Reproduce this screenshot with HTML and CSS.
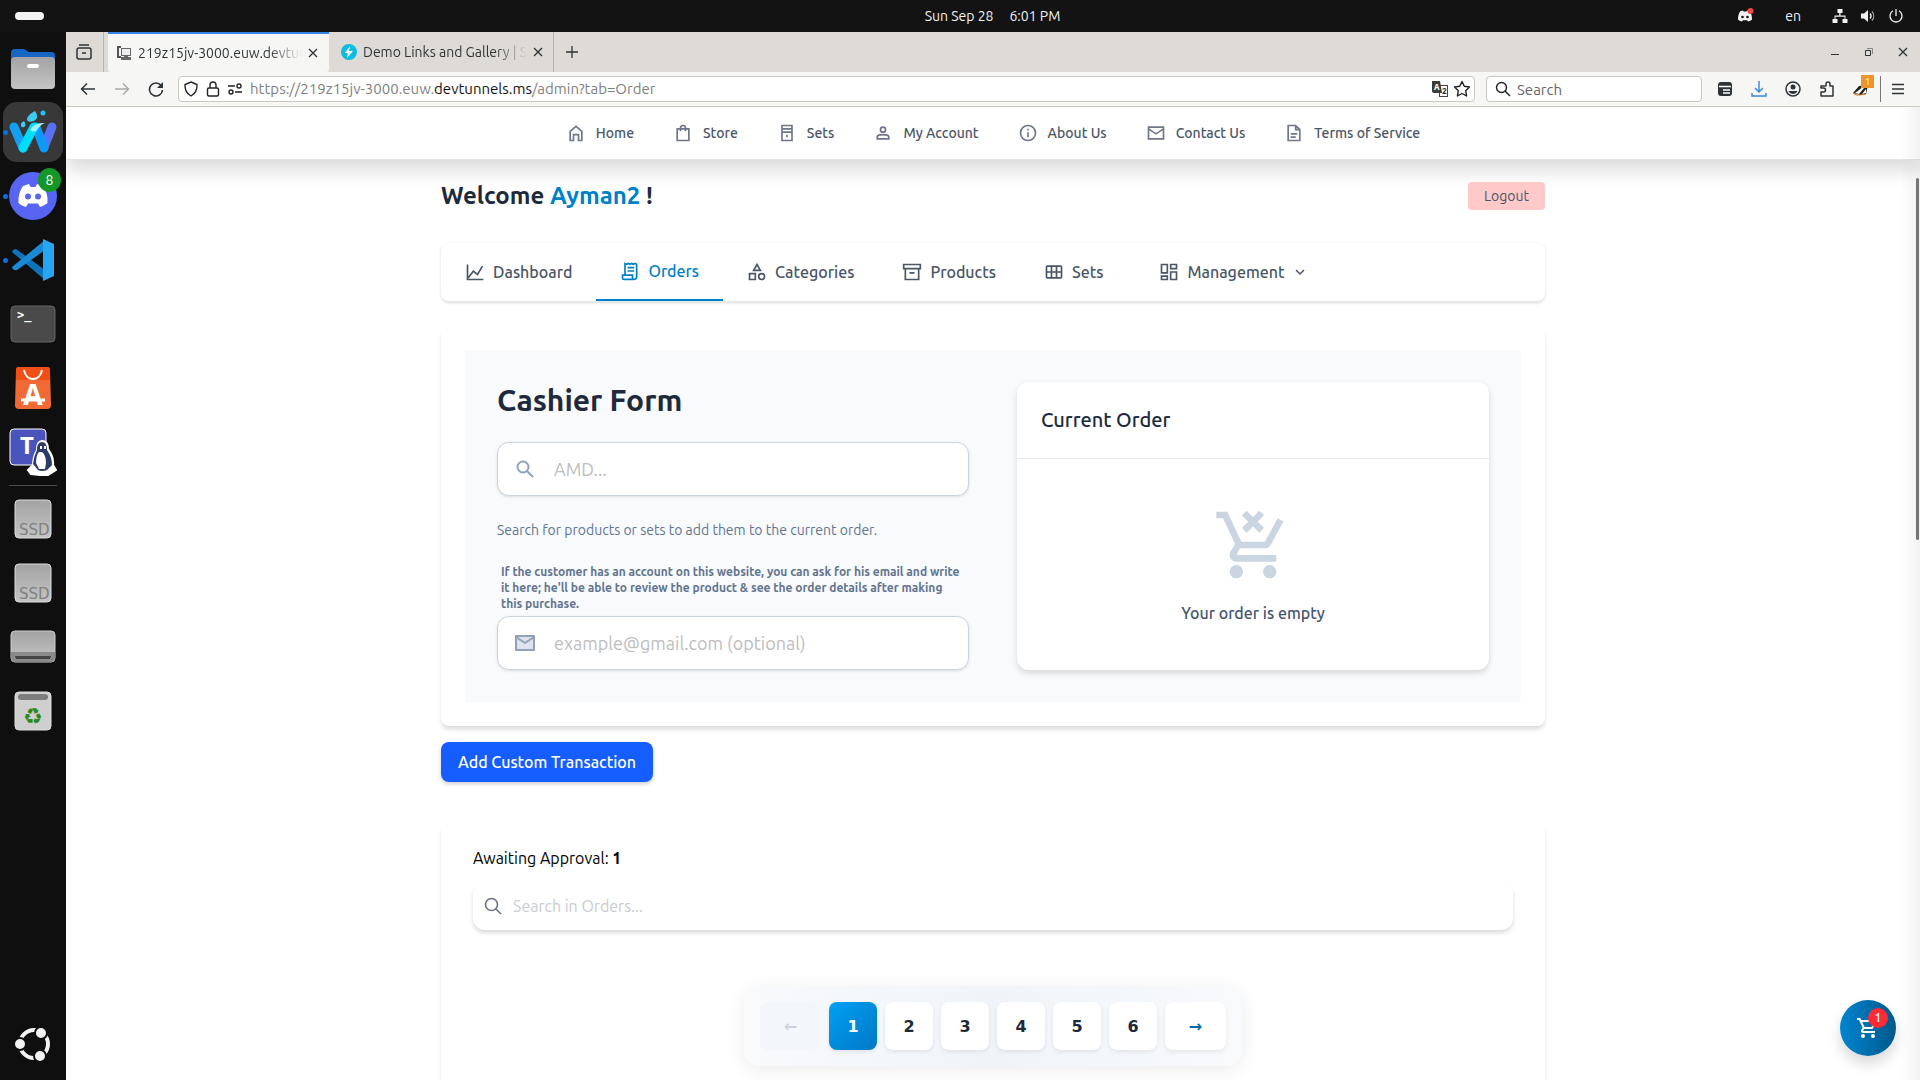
FILE: index.html
```html
<!DOCTYPE html>
<html lang="en">
<head>
    <meta charset="UTF-8">
    <meta name="viewport" content="width=device-width, initial-scale=1.0">
    <title>Admin - Orders</title>
    <link rel="stylesheet" href="styles.css">
</head>
<body>
    <!-- System bar -->
    <header class="topbar">
        <button class="activities" aria-label="Activities"></button>
        <div class="clock"><span>Sun Sep 28</span><span>6:01 PM</span></div>
        <div class="tray">
            <svg class="tray-discord" width="18" height="16" viewBox="0 0 18 16"><path fill="#f2f2f2" d="M5 3 7 2.500l.5 1h3l.5-1 3 1c1.500 2.500 2 5 2 8-1 1-2.500 1.700-4 2l-.8-1.300H6.800L6 13.500c-1.500-.3-3-1-4-2 0-3 .5-5.500 2-8z"/><circle cx="6.500" cy="9" r="1.300" fill="#131313"/><circle cx="11.500" cy="9" r="1.300" fill="#131313"/><circle cx="14.500" cy="3" r="3" fill="#f04747"/></svg>
            <span class="lang">en</span>
            <svg width="16" height="16" viewBox="0 0 16 16" fill="#f2f2f2"><path d="M5.500 1h5v4h-2v2.500h5V11h2v4h-5v-4h2V8.800h-9V11h2v4h-5v-4h2V7.500h4.700V5H5.500z"/></svg>
            <svg width="16" height="16" viewBox="0 0 16 16"><path fill="#f2f2f2" d="M1 5.500h3L8 2v12l-4-3.500H1z"/><path fill="none" stroke="#f2f2f2" stroke-width="1.300" d="M10 5.500c1.300 1.500 1.300 3.500 0 5"/><path fill="none" stroke="#999" stroke-width="1.300" d="M12 3.500c2.300 2.600 2.300 6.400 0 9"/></svg>
            <svg width="16" height="16" viewBox="0 0 16 16" fill="none" stroke="#f2f2f2" stroke-width="1.300"><path d="M5 2.800a6 6 0 1 0 6 0M8 1v7"/></svg>
        </div>
    </header>

    <div class="desktop">
        <!-- Dock -->
        <nav class="dock" aria-label="Dock">
            <button class="dock-item" aria-label="Files">
                <svg width="48" height="48" viewBox="0 0 48 48"><defs><linearGradient id="grey" x1="0" y1="0" x2="0" y2="1"><stop offset="0" stop-color="#a3a3a3"/><stop offset="1" stop-color="#c4c4c4"/></linearGradient></defs><path fill="#1766c2" d="M2 9q0-4 4-4h9l5 3h22q4 0 4 4v14H2z"/><rect x="2" y="13" width="44" height="32" rx="4" fill="url(#grey)"/><rect x="18" y="20" width="12" height="4" rx="2" fill="#fff"/></svg>
            </button>
            <button class="dock-item running current" aria-label="Waterfox">
                <svg width="48" height="48" viewBox="0 0 48 48" fill="none" stroke-linecap="round" stroke-linejoin="round" stroke-width="9"><path stroke="#12a0f2" d="m5 19 9 21"/><path stroke="#5871f4" d="m43 19-8 20"/><path stroke="#0d9bfa" d="m27 19 8 21"/><path stroke="#00dcfb" d="m14 40 11-21"/><path fill="#9ff6fc" d="M21 22q4-8 15-7-4 1-8 7-3 3-7 0z"/><path fill="#3ecdf0" d="M18 12q0-5 8-9 5 7-1 10-6 2-7-1zM12 18q-1-3 3-5 3 5 0 6-2 1-3-1z"/><circle cx="34" cy="5" r="2.500" fill="#25c3ee"/></svg>
            </button>
            <button class="dock-item running" aria-label="Discord">
                <svg width="48" height="48" viewBox="0 0 48 48"><circle cx="24" cy="24" r="24" fill="#5865f2"/><path fill="#fff" d="m14 14 6-2 1.500 3h5l1.500-3 6 2c3.500 5 5 10.500 4.500 17-2 2-5 3.300-7.500 4l-2-3.500h-10L17 35c-2.500-.7-5.500-2-7.500-4C9 24.500 10.500 19 14 14z"/><circle cx="19" cy="24.500" r="3" fill="#5865f2"/><circle cx="29" cy="24.500" r="3" fill="#5865f2"/></svg>
                <span class="dock-badge">8</span>
            </button>
            <button class="dock-item running" aria-label="Code">
                <svg width="48" height="48" viewBox="0 0 48 48"><path fill="#0d75bd" d="M3 16q1-3 4-3l29 21v10z"/><path fill="#1a8ad4" d="m36 4-33 27q1 4 5 3l28-20z"/><path fill="#27a5f2" d="m34 3 11 5v32l-11 5z"/></svg>
            </button>
            <button class="dock-item" aria-label="Terminal">
                <svg width="48" height="48" viewBox="0 0 48 48"><rect x="2" y="6" width="44" height="36" rx="4" fill="#4a4a4a" stroke="#656565"/><text class="icon-mono" x="8" y="19">&gt;_</text></svg>
            </button>
            <button class="dock-item" aria-label="App Center">
                <svg width="48" height="48" viewBox="0 0 48 48"><path fill="#ef6a35" d="M10 3h28q3 0 3 3l1 35q0 4-4 4H10q-4 0-4-4L7 6q0-3 3-3z"/><path fill="#f04e17" d="M10 3h28q3 0 3 3v10H7V6q0-3 3-3z"/><path fill="none" stroke="#fff" stroke-width="2" d="M15 6c2 12 16 12 18 0"/><text class="icon-store" x="24" y="41">A</text><path stroke="#fff" stroke-width="3" d="M12 36h24"/></svg>
            </button>
            <button class="dock-item" aria-label="Teams for Linux">
                <svg width="48" height="48" viewBox="0 0 48 48"><rect x="1" y="1" width="36" height="36" rx="4" fill="#4b53bc" stroke="#fff"/><text class="icon-teams" x="18" y="26">T</text><path fill="#fff" stroke="#fff" stroke-width="2" d="M33 13q6 0 6 8 6 8 5 16l3 5-8 5h-8l-9-1-3-4 5-5q0-8 4-15 0-9 5-9z"/><path fill="#2c3a66" d="M33 14q5 0 5 8 5 7 5 15l-5 5q-5 2-9 0l-5-6q1-8 4-14 0-8 5-8z"/><path fill="#fff" d="M33 24q4 3 4 11l-1 6h-6l-3-6q0-8 3-11z"/><path fill="#fff" d="M31 18h2v3h-2zM35 18h2v3h-2z"/></svg>
            </button>
            <hr class="dock-line">
            <button class="dock-item" aria-label="SSD volume">
                <svg width="48" height="48" viewBox="0 0 48 48"><rect x="6" y="5" width="36" height="38" rx="4" fill="url(#grey)" stroke="#ddd"/><text class="icon-ssd" x="10" y="40">SSD</text></svg>
            </button>
            <button class="dock-item" aria-label="Second SSD volume">
                <svg width="48" height="48" viewBox="0 0 48 48"><rect x="6" y="5" width="36" height="38" rx="4" fill="url(#grey)" stroke="#ddd"/><text class="icon-ssd" x="10" y="40">SSD</text></svg>
            </button>
            <button class="dock-item" aria-label="Disk">
                <svg width="48" height="48" viewBox="0 0 48 48"><rect x="2" y="8" width="44" height="31" rx="4" fill="url(#grey)" stroke="#ccc"/><path fill="#8a8a8a" d="M2 29h44v6q0 4-4 4H6q-4 0-4-4z"/><path fill="#444" d="M6 33h36l-1 3H7z"/></svg>
            </button>
            <button class="dock-item" aria-label="Trash">
                <svg width="48" height="48" viewBox="0 0 48 48"><rect x="6" y="5" width="36" height="38" rx="4" fill="#cfcfcf" stroke="#ddd"/><rect x="9" y="7" width="30" height="6" rx="3" fill="#7d7d7d"/><text class="icon-recycle" x="24" y="37">♻</text></svg>
            </button>
            <button class="dock-item dock-apps" aria-label="Show Apps">
                <svg width="48" height="48" viewBox="0 0 48 48"><circle cx="25" cy="24" r="14" fill="none" stroke="#f2f2f2" stroke-width="4"/><g fill="#f2f2f2" stroke="#0f0f0f" stroke-width="2"><circle cx="11" cy="24" r="6"/><circle cx="32" cy="13" r="6"/><circle cx="31" cy="36" r="6"/></g></svg>
            </button>
        </nav>

        <!-- Browser window -->
        <div class="browser">
            <div class="tabstrip">
                <button class="tab-list" aria-label="List tabs"><svg width="18" height="18" viewBox="0 0 18 18" fill="none" stroke="#2e3436" stroke-width="1.500"><rect x="2" y="5" width="14" height="11" rx="2"/><path d="M4 2h10M7 10h4"/></svg></button>
                <div class="tab tab-active">
                    <svg width="16" height="16" viewBox="0 0 16 16"><path fill="#555" d="M1 1h4v2H3v8h2v2H1z"/><rect x="5.500" y="3.500" width="9" height="7" fill="#eee" stroke="#666"/><path fill="#666" d="M8 11h4v1h3v3H5v-3h3z"/></svg>
                    <span class="tab-title">219z15jv-3000.euw.devtunnels</span>
                    <button class="tab-close" aria-label="Close tab"><svg width="10" height="10" viewBox="0 0 10 10" stroke="#2e3436" stroke-width="1.300"><path d="m1 1 8 8M9 1 1 9"/></svg></button>
                </div>
                <div class="tab">
                    <svg width="16" height="16" viewBox="0 0 16 16"><circle cx="8" cy="8" r="8" fill="#0dbce0"/><path fill="#fff" d="M9 2 4 9h3l-1 5 6-7H8z"/></svg>
                    <span class="tab-title">Demo Links and Gallery | S</span>
                    <button class="tab-close" aria-label="Close tab"><svg width="10" height="10" viewBox="0 0 10 10" stroke="#2e3436" stroke-width="1.300"><path d="m1 1 8 8M9 1 1 9"/></svg></button>
                </div>
                <button class="tab-new" aria-label="New tab"><svg width="14" height="14" viewBox="0 0 14 14" stroke="#2e3436" stroke-width="1.300"><path d="M7 1v12M1 7h12"/></svg></button>
                <div class="window-buttons">
                    <button aria-label="Minimize"><svg width="10" height="10" viewBox="0 0 10 10" stroke="#2e3436"><path d="M1 7.500h8"/></svg></button>
                    <button aria-label="Restore"><svg width="10" height="10" viewBox="0 0 10 10" fill="none" stroke="#2e3436"><path d="M1.500 3.500h5v5h-5z"/><path stroke="#888" d="M3 1.500h5.500V7"/></svg></button>
                    <button aria-label="Close"><svg width="10" height="10" viewBox="0 0 10 10" stroke="#2e3436" stroke-width="1.300"><path d="m1 1 8 8M9 1 1 9"/></svg></button>
                </div>
            </div>

            <div class="toolbar">
                <button class="tool" aria-label="Back"><svg width="16" height="16" viewBox="0 0 16 16" fill="none" stroke="#2e3436" stroke-width="1.500"><path d="M15 8H1.500M7 2.500 1.500 8 7 13.500"/></svg></button>
                <button class="tool" aria-label="Forward"><svg width="16" height="16" viewBox="0 0 16 16" fill="none" stroke="#aaa" stroke-width="1.500"><path d="M1 8h13.500M9 2.500 14.500 8 9 13.500"/></svg></button>
                <button class="tool" aria-label="Reload"><svg width="16" height="16" viewBox="0 0 16 16" fill="none" stroke="#2e3436" stroke-width="1.600"><path d="M13.500 5A6.500 6.500 0 1 0 14.500 9"/><path fill="#2e3436" stroke="none" d="M15 1v6H9z"/></svg></button>
                <div class="urlbar">
                    <svg width="16" height="16" viewBox="0 0 16 16" fill="none" stroke="#222" stroke-width="1.400"><path d="m8 1 6 2.500c.3 5-1.500 9-6 11.500-4.500-2.500-6.300-6.500-6-11.500z"/></svg>
                    <svg width="16" height="16" viewBox="0 0 16 16" fill="none" stroke="#222" stroke-width="1.400"><rect x="2.500" y="7" width="11" height="8" rx="1.500"/><path d="M5 7V4a3 3 0 0 1 6 0v3"/></svg>
                    <svg width="16" height="16" viewBox="0 0 16 16" fill="none" stroke="#222" stroke-width="1.400"><path d="M1 5h7M8 11h7"/><circle cx="12" cy="5" r="2"/><circle cx="4" cy="11" r="2"/></svg>
                    <span class="url">https://219z15jv-3000.euw.<b>devtunnels.ms</b>/admin?tab=Order</span>
                    <button class="mini" aria-label="Translate"><svg width="18" height="18" viewBox="0 0 18 18"><rect x="8.500" y="5.500" width="8" height="11" fill="#fff" stroke="#444"/><path fill="#3c3c3c" d="M1 1h8l2 12H3q-2 0-2-2z"/><text x="3" y="10" class="icon-tr" fill="#fff">A</text><text x="11" y="14" class="icon-tr" fill="#333">2</text></svg></button>
                    <button class="mini" aria-label="Bookmark"><svg width="18" height="18" viewBox="0 0 18 18" fill="none" stroke="#222" stroke-width="1.400" stroke-linejoin="round"><path d="m9 1.500 2.300 4.800 5.200.7-3.800 3.700.9 5.300L9 13.500 4.400 16l.9-5.300L1.500 7l5.200-.7z"/></svg></button>
                </div>
                <div class="browser-search">
                    <svg width="16" height="16" viewBox="0 0 16 16" fill="none" stroke="#222" stroke-width="1.400"><circle cx="6.500" cy="6.500" r="5"/><path d="m10 10 5 5"/></svg>
                    <input type="text" placeholder="Search" aria-label="Search the web">
                </div>
                <button class="tool" aria-label="Containers"><svg width="16" height="16" viewBox="0 0 16 16"><rect x="1" y="1" width="14" height="14" rx="3" fill="#2e3436"/><path stroke="#fff" stroke-width="1.500" d="M2 5.500h12M6 9h7M6 12h7"/></svg></button>
                <button class="tool" aria-label="Downloads"><svg width="16" height="16" viewBox="0 0 16 16" fill="none" stroke="#3584e4" stroke-width="1.400"><path d="M8 0v11M4 7l4 4 4-4M1 12v3h14v-3"/></svg></button>
                <button class="tool" aria-label="Account"><svg width="16" height="16" viewBox="0 0 16 16"><circle cx="8" cy="8" r="7" fill="none" stroke="#2e3436" stroke-width="1.500"/><circle cx="8" cy="6" r="2.500" fill="#2e3436"/><path fill="#2e3436" d="M3.500 10h9q-1.500 3-4.500 3t-4.500-3z"/></svg></button>
                <button class="tool" aria-label="Extensions"><svg width="16" height="16" viewBox="0 0 16 16" fill="none" stroke="#2e3436" stroke-width="1.500" stroke-linejoin="round"><path d="M2 15V11h2.500a1.600 1.600 0 0 0 0-4H2V5h5V3a2 2 0 0 1 4 0v2h3v10z"/></svg></button>
                <button class="tool tool-badger" aria-label="Privacy Badger"><svg width="16" height="16" viewBox="0 0 16 16"><path fill="#222" d="M0 12 6 5l9-1-2 9-6 1z"/><path fill="#fff" d="m2 12 8-6 1 1-5 6zM9 13l4-5v4z"/><path fill="none" stroke="#e0741e" d="m0 12 3 2h4l6-1"/></svg><span class="tool-badge">1</span></button>
                <button class="tool tool-menu" aria-label="Menu"><svg width="16" height="16" viewBox="0 0 16 16" stroke="#2e3436" stroke-width="1.400"><path d="M2 3.500h12M2 8h12M2 12.500h12"/></svg></button>
            </div>

            <!-- Web page -->
            <div class="page">
                <nav class="site-nav">
                    <a href="#"><svg viewBox="0 0 24 24"><path d="M5 10v11h4v-7h6v7h4V10l-7-6z"/></svg>Home</a>
                    <a href="#"><svg viewBox="0 0 24 24"><path d="M5 7h14v14H5zM9 10V6a3 3 0 0 1 6 0v4"/></svg>Store</a>
                    <a href="#"><svg viewBox="0 0 24 24"><path d="M6 3h12v18H6zM6 7h12M6 11h12M12 14v3"/></svg>Sets</a>
                    <a href="#"><svg viewBox="0 0 24 24"><circle cx="12" cy="8" r="3"/><path d="M5 19v-2c0-2 4-3 7-3s7 1 7 3v2z"/></svg>My Account</a>
                    <a href="#"><svg viewBox="0 0 24 24"><circle cx="12" cy="12" r="9"/><path d="M12 11v6M12 7v2"/></svg>About Us</a>
                    <a href="#"><svg viewBox="0 0 24 24"><path d="M3 5h18v14H3zM3 7l9 6 9-6"/></svg>Contact Us</a>
                    <a href="#"><svg viewBox="0 0 24 24"><path d="M5 3h9l5 5v13H5zM14 3v5h5M8 13h8M8 17h6"/></svg>Terms of Service</a>
                </nav>

                <main class="container">
                    <div class="welcome">
                        <h1>Welcome <span>Ayman2</span> !</h1>
                        <button class="logout">Logout</button>
                    </div>

                    <div class="tabs">
                        <button><svg viewBox="0 0 24 24"><path d="M3 3v18h19M4 19l6-8 5 4 6-10"/></svg>Dashboard</button>
                        <button class="active"><svg viewBox="0 0 24 24"><path d="M6 16V3l2 1 2-1 2 1 2-1 2 1 2-1 2 1v15a3 3 0 0 1-3 3H5a2 2 0 0 1-2-2v-3h12v3a2 2 0 0 0 2 2M9 8h8M9 12h8"/></svg>Orders</button>
                        <button><svg viewBox="0 0 24 24"><path d="m12 3-4 7h8zM3 14h7v7H3z"/><circle cx="17.500" cy="17.500" r="3.500"/></svg>Categories</button>
                        <button><svg viewBox="0 0 24 24"><path d="M2 3h20v5H2zM4 8v13h16V8M9 13h6"/></svg>Products</button>
                        <button><svg viewBox="0 0 24 24"><rect x="3" y="5" width="18" height="14" rx="1"/><path d="M3 12h18M9 5v14M15 5v14"/></svg>Sets</button>
                        <button class="tab-management"><svg viewBox="0 0 24 24"><path d="M3 3h7v10H3zM14 3h7v5h-7zM3 17h7v4H3zM14 12h7v9h-7z"/></svg>Management<svg class="chevron" viewBox="0 0 16 16"><path d="m4 6 4 4 4-4"/></svg></button>
                    </div>

                    <section class="card cashier-card">
                        <div class="cashier">
                            <form class="cashier-form">
                                <h2>Cashier Form</h2>
                                <div class="field">
                                    <svg width="20" height="20" viewBox="0 0 20 20" fill="none" stroke="#90a1b9" stroke-width="2"><circle cx="8" cy="8" r="5.500"/><path d="m12 12 6 6"/></svg>
                                    <input type="text" placeholder="AMD..." aria-label="Search products">
                                </div>
                                <p class="hint">Search for products or sets to add them to the current order.</p>
                                <label for="email">If the customer has an account on this website, you can ask for his email and write it here; he'll be able to review the product &amp; see the order details after making this purchase.</label>
                                <div class="field">
                                    <svg width="20" height="20" viewBox="0 0 20 20" fill="#dde4ec" stroke="#90a1b9" stroke-width="2" stroke-linejoin="round"><path d="M1 3h18v14H1z"/><path fill="none" d="m1 4 9 6 9-6"/></svg>
                                    <input type="email" id="email" placeholder="example@gmail.com (optional)">
                                </div>
                            </form>

                            <div class="order">
                                <h3>Current Order</h3>
                                <div class="order-empty">
                                    <svg width="80" height="80" viewBox="0 0 24 24" fill="#cad5e2"><path d="M7 18a2 2 0 1 0 0 4 2 2 0 0 0 0-4zm10 0a2 2 0 1 0 0 4 2 2 0 0 0 0-4zM7.170 14.750l.03-.12.9-1.630h7.450c.75 0 1.410-.41 1.750-1.030l3.860-7.010L19.420 4l-3.870 7H8.530L4.270 2H1v2h2l3.600 7.590-1.350 2.450c-.16.28-.25.61-.25.96 0 1.100.9 2 2 2h12v-2H7.420c-.13 0-.25-.11-.25-.25z"/><path fill="none" stroke="#cad5e2" stroke-width="2" d="m9.400 2.400 5.200 5.200M14.600 2.400 9.400 7.600"/></svg>
                                    <p>Your order is empty</p>
                                </div>
                            </div>
                        </div>
                    </section>

                    <button class="add-custom">Add Custom Transaction</button>

                    <section class="card orders-card">
                        <p class="awaiting">Awaiting Approval: <b>1</b></p>
                        <div class="order-search">
                            <svg width="18" height="18" viewBox="0 0 18 18" fill="none" stroke="#6a7282" stroke-width="1.600"><circle cx="7.500" cy="7.500" r="6"/><path d="m12 12 5 5"/></svg>
                            <input type="text" placeholder="Search in Orders..." aria-label="Search in orders">
                        </div>
                        <div class="pager">
                            <button class="arrow" disabled>←</button>
                            <button class="active">1</button>
                            <button>2</button>
                            <button>3</button>
                            <button>4</button>
                            <button>5</button>
                            <button>6</button>
                            <button class="arrow">→</button>
                        </div>
                    </section>
                </main>

                <div class="scroll-thumb"></div>
                <button class="cart" aria-label="Cart">
                    <svg width="24" height="24" viewBox="0 0 24 24" fill="#fff"><path d="M7 18a2 2 0 1 0 0 4 2 2 0 0 0 0-4zm10 0a2 2 0 1 0 0 4 2 2 0 0 0 0-4zM15.550 13c.75 0 1.410-.41 1.750-1.030L20.880 5.480A1 1 0 0 0 20 4H5.210l-.94-2H1v2h2l3.600 7.590-1.350 2.440C4.520 15.370 5.480 17 7 17h12v-2H7l1.100-2zM6.160 6h12.150l-2.760 5H8.530z"/></svg>
                    <span>1</span>
                </button>
            </div>
        </div>
    </div>
</body>
</html>
```
FILE: styles.css
```css
/* Global Styles */
* {
    box-sizing: border-box;
}

body {
    font-family: Ubuntu, 'Noto Sans', sans-serif;
    margin: 0;
    height: 100vh;
    overflow: hidden;
    display: flex;
    flex-direction: column;
    background-color: #0f0f0f;
    color: #000;
}

h1, h2, h3, p {
    margin: 0;
}

button {
    font-family: inherit;
    padding: 0;
    border: none;
    background: none;
    color: inherit;
    cursor: pointer;
}

input {
    font-family: inherit;
    flex: 1;
    min-width: 0;
    border: none;
    padding: 0;
    background: none;
    outline: none;
}

svg {
    display: block;
    flex-shrink: 0;
}

/* System bar */
.topbar {
    height: 32px;
    flex-shrink: 0;
    display: grid;
    grid-template-columns: 1fr auto 1fr;
    align-items: center;
    padding: 0 16px 0 15px;
    background-color: #131313;
    color: #f2f2f2;
    font-size: 14px;
}

.activities {
    width: 29px;
    height: 8px;
    border-radius: 4px;
    background-color: #f2f2f2;
}

.clock {
    display: flex;
    gap: 16px;
    padding-left: 66px;
}

.tray {
    display: flex;
    align-items: center;
    justify-content: flex-end;
    gap: 12px;
}

.lang {
    margin: 0 19px;
}

/* Dock */
.desktop {
    flex: 1;
    min-height: 0;
    display: flex;
}

.dock {
    width: 66px;
    flex-shrink: 0;
    display: flex;
    flex-direction: column;
    align-items: center;
    padding: 4px 0;
}

.dock-item {
    position: relative;
    width: 60px;
    height: 60px;
    margin: 2px 0;
    flex-shrink: 0;
    display: flex;
    align-items: center;
    justify-content: center;
    border-radius: 14px;
}

.current {
    background-color: #383838;
}

.running::before {
    content: "";
    position: absolute;
    left: 0;
    top: 28px;
    width: 5px;
    height: 5px;
    border-radius: 50%;
    background-color: #0073e5;
}

.dock-badge {
    position: absolute;
    top: 2px;
    right: 2px;
    width: 23px;
    height: 24px;
    line-height: 24px;
    border-radius: 50%;
    background-color: #149628;
    color: #fff;
    font-size: 14px;
}

.dock-line {
    width: 48px;
    height: 1px;
    margin: 1px 0;
    flex-shrink: 0;
    border: none;
    background-color: #4a4a4a;
}

.dock-apps {
    margin-top: auto;
}

.icon-mono {
    font: bold 12px 'DejaVu Sans Mono', monospace;
    fill: #fff;
}

.icon-store {
    font: bold 28px 'Noto Sans', sans-serif;
    fill: #fff;
    text-anchor: middle;
}

.icon-teams {
    font: bold 24px 'Noto Sans', sans-serif;
    fill: #fff;
    text-anchor: middle;
}

.icon-ssd {
    font: 15px 'DejaVu Sans', sans-serif;
    fill: #808080;
}

.icon-recycle {
    font: 22px 'DejaVu Sans', sans-serif;
    fill: #2a8a1c;
    text-anchor: middle;
}

.icon-tr {
    font: bold 8px 'Noto Sans', sans-serif;
}

/* Browser */
.browser {
    flex: 1;
    min-width: 0;
    display: flex;
    flex-direction: column;
    background-color: #fff;
}

.tabstrip {
    height: 40px;
    flex-shrink: 0;
    display: flex;
    background-color: #dedad5;
    color: #2e3436;
}

.tab-list {
    width: 38px;
    display: flex;
    align-items: center;
    justify-content: center;
    padding-right: 2px;
    border-right: 1px solid #b5b1ad;
    margin-right: 4px;
}

.tab {
    width: 225px;
    display: flex;
    align-items: center;
    gap: 6px;
    padding: 0 10px 0 12px;
    border-right: 1px solid #b5b1ad;
}

.tab-active {
    width: 221px;
    padding: 0 11px 0 8px;
    background-color: #f6f6f4;
    border-top: 2px solid #3584e4;
    border-right: none;
    border-radius: 0 0 3px 3px;
}

.tab-title {
    flex: 1;
    overflow: hidden;
    white-space: nowrap;
    font-size: 14px;
    mask-image: linear-gradient(to right, #000 80%, transparent);
}

.tab-new {
    width: 36px;
    display: flex;
    align-items: center;
    justify-content: center;
}

.window-buttons {
    margin-left: auto;
    display: flex;
    gap: 24px;
    padding-right: 12px;
}

.toolbar {
    height: 35px;
    flex-shrink: 0;
    display: flex;
    align-items: center;
    padding: 0 6px 0 5px;
    background-color: #f6f6f4;
    border-bottom: 1px solid #cdc7c0;
}

.tool {
    position: relative;
    width: 34px;
    height: 26px;
    display: flex;
    align-items: center;
    justify-content: center;
}

.tool-badge {
    position: absolute;
    top: -1px;
    right: 4px;
    width: 13px;
    height: 13px;
    line-height: 13px;
    background-color: #f0932b;
    color: #fff;
    font-size: 10px;
}

.tool-menu {
    margin-left: 2px;
    border-left: 1px solid #77767b;
}

.urlbar, .browser-search {
    height: 26px;
    display: flex;
    align-items: center;
    background-color: #fff;
    border: 1px solid #cdc7c2;
    border-radius: 4px;
}

.urlbar {
    flex: 1;
    gap: 6px;
    margin-left: 5px;
    padding: 0 3px 0 4px;
}

.urlbar .mini + .mini {
    margin-left: -2px;
}

.url {
    flex: 1;
    padding-left: 1px;
    font-size: 15px;
    line-height: 16px;
    color: #808080;
}

.url b {
    font-weight: normal;
    color: #111;
}

.browser-search {
    width: 216px;
    gap: 6px;
    margin: 0 6px 0 11px;
    padding: 0 8px;
}

.browser-search input {
    font-size: 15px;
}

.browser-search input::placeholder {
    color: #666;
}

/* Site navigation */
.page {
    position: relative;
    flex: 1;
    min-height: 0;
    overflow: hidden;
}

.page::after {
    content: "";
    position: absolute;
    top: 0;
    right: 0;
    bottom: 0;
    width: 20px;
    background-image: linear-gradient(to right, transparent, rgba(0, 0, 0, 0.05));
}

.site-nav {
    height: 53px;
    display: flex;
    align-items: center;
    justify-content: center;
    gap: 39px;
    border-bottom: 1px solid #e5e5e5;
    box-shadow: 0 10px 20px rgba(0, 0, 0, 0.15);
}

.site-nav a {
    display: flex;
    align-items: center;
    gap: 10px;
    font-size: 14px;
    font-weight: 500;
    color: #4a5565;
    text-decoration: none;
}

.site-nav svg, .tabs svg {
    width: 20px;
    height: 20px;
    fill: none;
    stroke: currentColor;
    stroke-width: 2;
}

.site-nav svg {
    color: #6f768a;
}

/* Main content */
.container {
    max-width: 1104px;
    margin: 0 auto;
}

.welcome {
    display: flex;
    align-items: center;
    justify-content: space-between;
    margin: 20px 0 31px;
}

.welcome h1 {
    font-size: 24px;
    line-height: 32px;
    font-weight: 600;
    color: #1e293b;
}

.welcome span {
    color: #0080c8;
}

.logout {
    height: 28px;
    padding: 0 16px;
    border-radius: 4px;
    background-color: #ffc9c9;
    color: #4a5565;
    font-size: 14px;
}

.tabs {
    height: 59px;
    display: flex;
    border-radius: 8px;
    border-bottom: 1px solid #e5e7eb;
    box-shadow: 0 1px 3px rgba(0, 0, 0, 0.15);
}

.tabs button {
    display: flex;
    align-items: center;
    gap: 8px;
    padding: 0 24px;
    font-size: 16px;
    font-weight: 500;
    color: #4a5565;
}

.tabs .active {
    color: #0080c8;
    border-bottom: 2px solid #0080c8;
}

.tabs .tab-management {
    margin-left: 8px;
}

.tabs .chevron {
    width: 16px;
    height: 16px;
    stroke-width: 1.5;
}

.card {
    border-radius: 8px;
    box-shadow: 0 4px 5px -1px rgba(0, 0, 0, 0.16);
}

.cashier-card {
    margin-top: 24px;
    padding: 24px;
}

.cashier {
    display: grid;
    grid-template-columns: 1fr 1fr;
    gap: 48px;
    padding: 32px;
    background-color: #f8fafc;
}

.cashier-form h2 {
    margin-bottom: 24px;
    font-size: 30px;
    line-height: 36px;
    font-weight: 600;
    color: #1e293b;
}

.field {
    height: 54px;
    display: flex;
    align-items: center;
    gap: 19px;
    padding: 0 17px;
    background-color: #fff;
    border: 1px solid #cad5e2;
    border-radius: 12px;
    box-shadow: 0 1px 3px rgba(0, 0, 0, 0.12);
}

.field input {
    font-size: 18px;
}

.field input::placeholder {
    color: #bdbdbd;
}

.hint {
    margin: 24px 0;
    font-size: 14px;
    line-height: 20px;
    color: #62748e;
}

.cashier-form label {
    display: block;
    margin-bottom: 4px;
    padding: 0 4px;
    font-size: 12px;
    line-height: 16px;
    font-weight: 600;
    color: #62748e;
}

.order {
    display: flex;
    flex-direction: column;
    background-color: #fff;
    border-radius: 12px;
    box-shadow: 0 3px 6px rgba(0, 0, 0, 0.14);
}

.order h3 {
    padding: 24px;
    font-size: 20px;
    line-height: 28px;
    font-weight: 500;
    color: #1d293d;
    border-bottom: 1px solid #e2e8f0;
}

.order-empty {
    flex: 1;
    display: flex;
    flex-direction: column;
    align-items: center;
    justify-content: center;
    gap: 16px;
    font-size: 16px;
    line-height: 24px;
    font-weight: 500;
    color: #45556c;
}

.add-custom {
    height: 40px;
    margin-top: 16px;
    padding: 0 17px;
    border-radius: 8px;
    background-color: #155dfc;
    color: #fff;
    font-size: 16px;
    font-weight: 500;
    box-shadow: 0 2px 4px rgba(0, 0, 0, 0.2);
}

.orders-card {
    margin-top: 40px;
    padding: 24px 32px 80px;
}

.awaiting {
    font-size: 16px;
    line-height: 24px;
}

.order-search {
    height: 48px;
    display: flex;
    align-items: center;
    gap: 11px;
    margin: 12px 0 56px;
    padding: 0 11px;
    border-radius: 12px;
    box-shadow: 0 3px 4px rgba(0, 0, 0, 0.14);
}

.order-search input {
    font-size: 16px;
}

.order-search input::placeholder {
    color: #c8ccd3;
}

.pager {
    width: fit-content;
    display: flex;
    gap: 8px;
    margin: 0 auto;
    padding: 16px;
    border-radius: 16px;
    background-image: linear-gradient(to right, #f8fafc, #f0f4f9, #f8fafc);
    box-shadow: 0 4px 20px rgba(0, 0, 0, 0.08);
}

.pager button {
    width: 48px;
    height: 48px;
    border-radius: 8px;
    background-color: #fff;
    color: #1e293b;
    font: bold 16px 'DejaVu Sans', sans-serif;
    box-shadow: 0 2px 4px rgba(0, 0, 0, 0.08);
}

.pager .active {
    background-image: linear-gradient(135deg, #00a0f5, #0078c4);
    color: #fff;
}

.pager .arrow {
    width: 61px;
    color: #0069a8;
}

.pager .arrow:disabled {
    background-color: #f3f6fa;
    color: #cad1dc;
    box-shadow: none;
}

/* Floating elements */
.scroll-thumb {
    position: absolute;
    top: 71px;
    right: 1px;
    width: 3px;
    height: 362px;
    border-radius: 2px;
    background-color: #7a7a7a;
}

.cart {
    position: absolute;
    right: 24px;
    bottom: 24px;
    width: 56px;
    height: 56px;
    display: flex;
    align-items: center;
    justify-content: center;
    border-radius: 50%;
    background-image: linear-gradient(to right, #0084d1, #00598a);
    box-shadow: 0 8px 14px rgba(0, 0, 0, 0.15);
}

.cart span {
    position: absolute;
    top: 8px;
    right: 8px;
    width: 20px;
    height: 20px;
    line-height: 20px;
    border-radius: 50%;
    background-color: #fb2c36;
    color: #fff;
    font-size: 12px;
    font-weight: 500;
}
```
